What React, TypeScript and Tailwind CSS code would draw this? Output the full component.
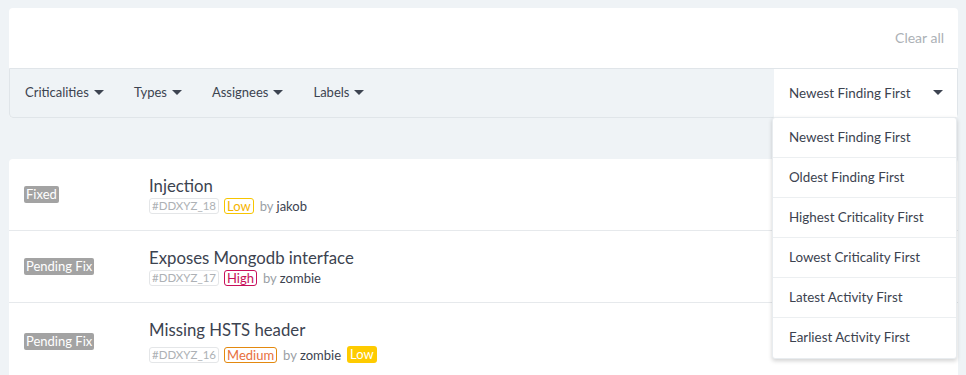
import React from "react";

const Caret = () => (
  <svg width="10" height="6" viewBox="0 0 10 6" className="ml-[5px] inline-block">
    <path d="M0 0 L10 0 L5 5 Z" fill="#3d4451" />
  </svg>
);

const filters = ["Criticalities", "Types", "Assignees", "Labels"];
const sorts = [
  "Newest Finding First",
  "Oldest Finding First",
  "Highest Criticality First",
  "Lowest Criticality First",
  "Latest Activity First",
  "Earliest Activity First",
];

type Row = {
  status: string;
  title: string;
  id: string;
  crit: string;
  critCls: string;
  by: string;
  extra?: boolean;
  statusMt: string;
  metaMt: string;
};

const rows: Row[] = [
  { status: "Fixed", title: "Injection", id: "#DDXYZ_18", crit: "Low", critCls: "border-[#f7c500] text-[#f5b400]", by: "jakob", statusMt: "mt-[27px]", metaMt: "mt-[2px]" },
  { status: "Pending Fix", title: "Exposes Mongodb interface", id: "#DDXYZ_17", crit: "High", critCls: "border-[#c8105a] text-[#c8105a]", by: "zombie", statusMt: "mt-[27px]", metaMt: "mt-[2px]" },
  { status: "Pending Fix", title: "Missing HSTS header", id: "#DDXYZ_16", crit: "Medium", critCls: "border-[#e3890f] text-[#e7703c]", by: "zombie", extra: true, statusMt: "mt-[30px]", metaMt: "mt-[6px]" },
];

export default function App() {
  return (
    <div
      className="relative w-[966px] h-[375px] overflow-hidden bg-[#eff3f6] pl-[9px] pr-[8px] pt-[8px] text-[#3c4350]"
      style={{ fontFamily: "Lato, 'Open Sans', sans-serif" }}
    >
      <div className="rounded-[4px] bg-white">
        <div className="h-[60px] flex items-center justify-end pr-[14px] pb-[2px]">
          <span className="text-[14px] text-[#acb1b6]">Clear all</span>
        </div>
        <div className="h-[50px] flex border border-[#e0e5e9] rounded-b-[4px] bg-[#eff3f6]">
          <div className="flex-1 flex items-center pl-[15px] gap-[30px] text-[13px]">
            {filters.map((f) => (
              <span key={f} className="flex items-center">
                {f}
                <Caret />
              </span>
            ))}
          </div>
          <div className="w-[183px] bg-white flex items-center justify-between pl-[15px] pr-[14px] text-[13.4px]">
            <span>Newest Finding First</span>
            <Caret />
          </div>
        </div>
      </div>

      <div className="mt-[41px] rounded-t-[4px] bg-white">
        {rows.map((r, i) => (
          <div
            key={i}
            className={`flex items-start h-[72px] ${i < 2 ? "border-b border-[#e6e9ec]" : ""}`}
          >
            <div className={`w-[140px] pl-[15px] flex ${r.statusMt}`}>
              <span className="bg-[#a3a3a3] text-white text-[13px] leading-[17px] px-[2px] rounded-[2px]">
                {r.status}
              </span>
            </div>
            <div className="flex flex-col pt-[17px]">
              <div className="text-[16.75px] leading-[20px]">{r.title}</div>
              <div className={`flex items-center ${r.metaMt} text-[13px]`}>
                <span className="border border-[#e4e6e8] rounded-[3px] text-[#adb1b5] text-[11.5px] leading-[14px] px-[2px]">
                  {r.id}
                </span>
                <span className={`ml-[5px] border rounded-[3px] leading-[14px] px-[2px] ${r.critCls}`}>
                  {r.crit}
                </span>
                <span className="ml-[6px] text-[#9aa0a5] leading-[14px]">by</span>
                <span className="ml-[3px] leading-[14px]">{r.by}</span>
                {r.extra && (
                  <span className="ml-[6px] bg-[#fecb00] text-white rounded-[3px] px-[3px] leading-[17px]">Low</span>
                )}
              </div>
            </div>
          </div>
        ))}
      </div>

      <div className="absolute left-[772px] top-[117px] w-[185px] bg-white rounded-[3px] border border-[#e8ecef] shadow-[0_2px_4px_rgba(0,0,0,0.18)]">
        {sorts.map((s, i) => (
          <div
            key={s}
            className={`h-[40px] flex items-center pl-[16px] pb-[1px] text-[13.4px] ${i < sorts.length - 1 ? "border-b border-[#eceff1]" : ""}`}
          >
            {s}
          </div>
        ))}
      </div>
    </div>
  );
}
